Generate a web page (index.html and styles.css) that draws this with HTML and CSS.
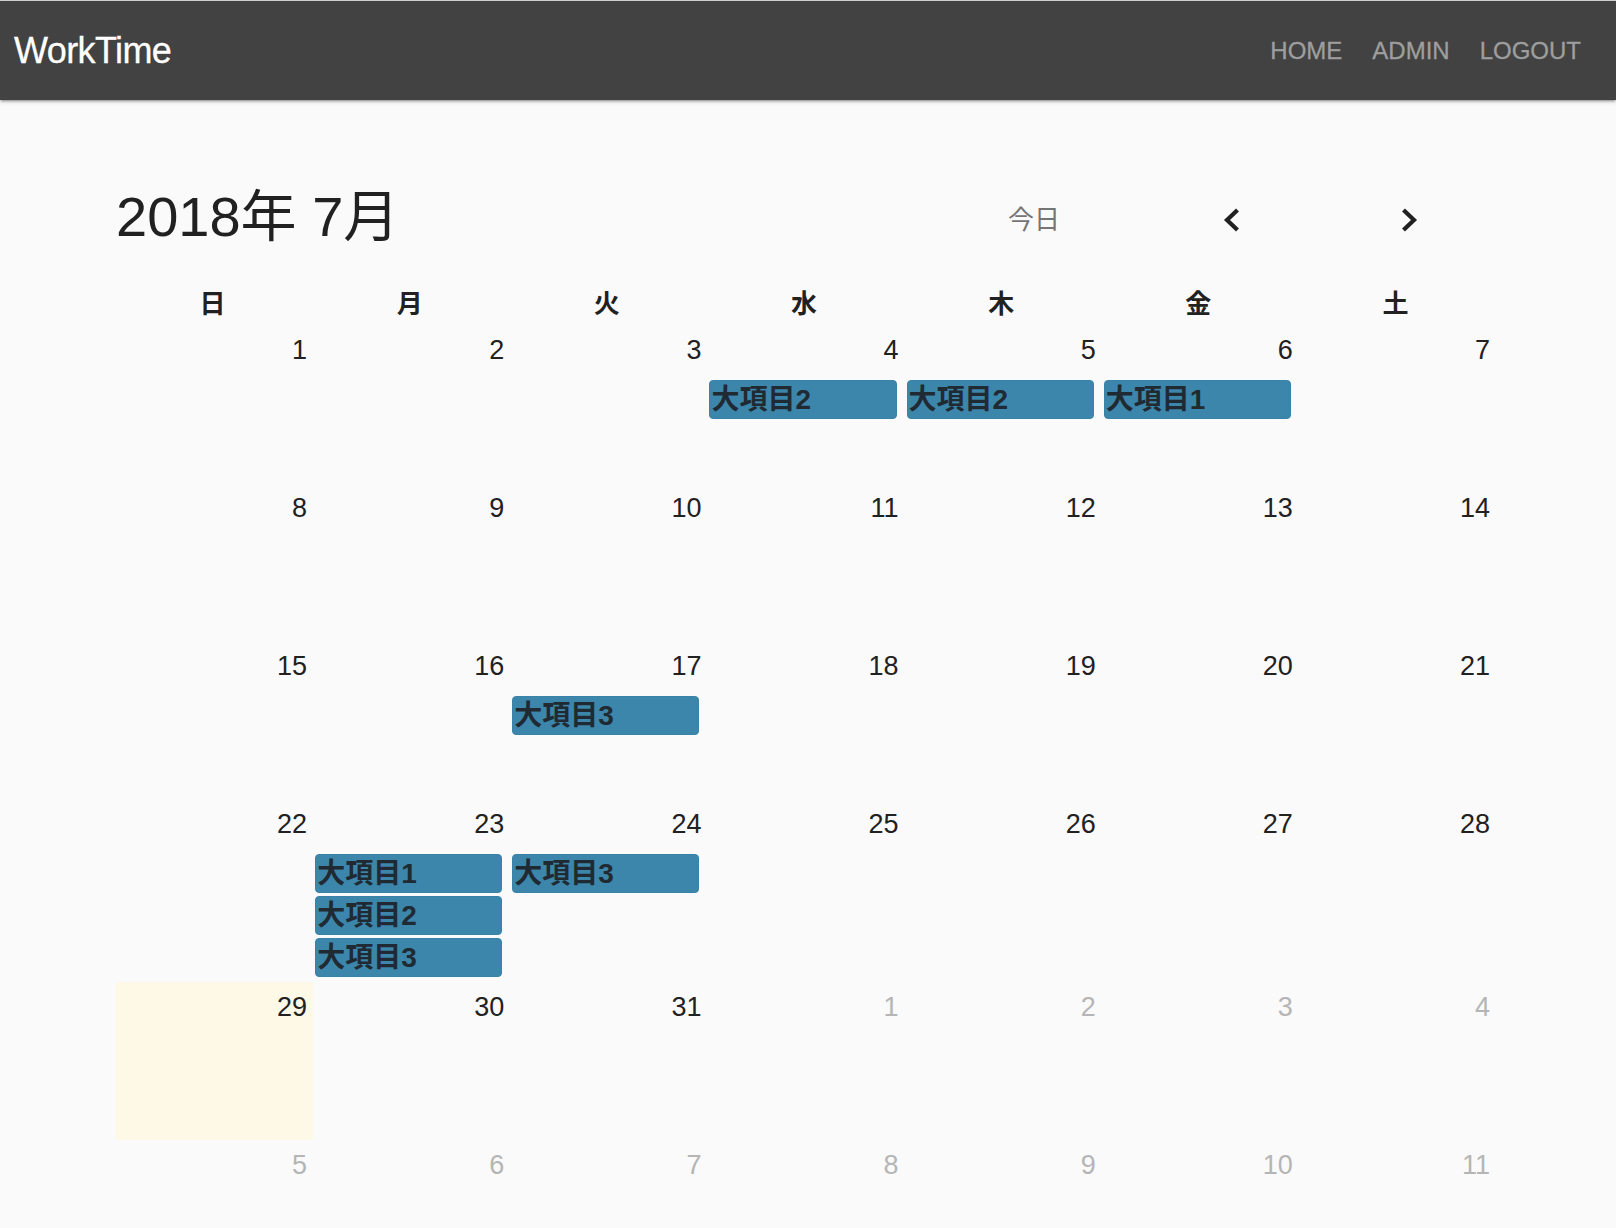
FILE: index.html
```html
<!DOCTYPE html>
<html lang="ja">
<head>
<meta charset="utf-8">
<title>WorkTime</title>
<link rel="stylesheet" href="styles.css">
</head>
<body>
<header class="navbar">
  <a class="brand" href="#">WorkTime</a>
  <nav class="nav-links">
    <a href="#">HOME</a>
    <a href="#">ADMIN</a>
    <a href="#">LOGOUT</a>
  </nav>
</header>
<main class="container">
  <div class="toolbar">
    <h2 class="title">2018年 7月</h2>
    <div class="controls">
      <button class="btn-today">今日</button>
      <button class="btn-arrow btn-prev" aria-label="prev"><svg width="20" height="26" viewBox="0 0 20 26"><polyline points="15.5,3 5,13 15.5,23" fill="none" stroke="#212121" stroke-width="4.2" stroke-linejoin="miter"/></svg></button>
      <button class="btn-arrow btn-next" aria-label="next"><svg width="20" height="26" viewBox="0 0 20 26"><polyline points="4.5,3 15,13 4.5,23" fill="none" stroke="#212121" stroke-width="4.2" stroke-linejoin="miter"/></svg></button>
    </div>
  </div>
  <div class="calendar">
    <div class="dow-row">
      <div class="dow">日</div><div class="dow">月</div><div class="dow">火</div><div class="dow">水</div><div class="dow">木</div><div class="dow">金</div><div class="dow">土</div>
    </div>
    <div class="week">
      <div class="day"><div class="num">1</div></div>
      <div class="day"><div class="num">2</div></div>
      <div class="day"><div class="num">3</div></div>
      <div class="day"><div class="num">4</div><div class="events"><div class="event">大項目2</div></div></div>
      <div class="day"><div class="num">5</div><div class="events"><div class="event">大項目2</div></div></div>
      <div class="day"><div class="num">6</div><div class="events"><div class="event">大項目1</div></div></div>
      <div class="day"><div class="num">7</div></div>
    </div>
    <div class="week">
      <div class="day"><div class="num">8</div></div>
      <div class="day"><div class="num">9</div></div>
      <div class="day"><div class="num">10</div></div>
      <div class="day"><div class="num">11</div></div>
      <div class="day"><div class="num">12</div></div>
      <div class="day"><div class="num">13</div></div>
      <div class="day"><div class="num">14</div></div>
    </div>
    <div class="week">
      <div class="day"><div class="num">15</div></div>
      <div class="day"><div class="num">16</div></div>
      <div class="day"><div class="num">17</div><div class="events"><div class="event">大項目3</div></div></div>
      <div class="day"><div class="num">18</div></div>
      <div class="day"><div class="num">19</div></div>
      <div class="day"><div class="num">20</div></div>
      <div class="day"><div class="num">21</div></div>
    </div>
    <div class="week">
      <div class="day"><div class="num">22</div></div>
      <div class="day"><div class="num">23</div><div class="events"><div class="event">大項目1</div><div class="event">大項目2</div><div class="event">大項目3</div></div></div>
      <div class="day"><div class="num">24</div><div class="events"><div class="event">大項目3</div></div></div>
      <div class="day"><div class="num">25</div></div>
      <div class="day"><div class="num">26</div></div>
      <div class="day"><div class="num">27</div></div>
      <div class="day"><div class="num">28</div></div>
    </div>
    <div class="week">
      <div class="day today"><div class="num">29</div></div>
      <div class="day"><div class="num">30</div></div>
      <div class="day"><div class="num">31</div></div>
      <div class="day other"><div class="num">1</div></div>
      <div class="day other"><div class="num">2</div></div>
      <div class="day other"><div class="num">3</div></div>
      <div class="day other"><div class="num">4</div></div>
    </div>
    <div class="week">
      <div class="day other"><div class="num">5</div></div>
      <div class="day other"><div class="num">6</div></div>
      <div class="day other"><div class="num">7</div></div>
      <div class="day other"><div class="num">8</div></div>
      <div class="day other"><div class="num">9</div></div>
      <div class="day other"><div class="num">10</div></div>
      <div class="day other"><div class="num">11</div></div>
    </div>
  </div>
</main>
</body>
</html>
```

FILE: styles.css
```css
* { box-sizing: border-box; }

html, body {
  margin: 0;
  padding: 0;
}

body {
  background: #fafafa;
  color: #212121;
  font-family: "Liberation Sans", "Noto Sans CJK JP", sans-serif;
}

.navbar {
  height: 100px;
  border-top: 1px solid #cfcfcf;
  background: #424242;
  display: flex;
  align-items: center;
  justify-content: space-between;
  padding: 0 20px 0 14px;
  box-shadow: 0 2px 2px 0 rgba(0,0,0,0.14), 0 3px 1px -2px rgba(0,0,0,0.12), 0 1px 5px 0 rgba(0,0,0,0.2);
  position: relative;
}

.brand {
  color: #ffffff;
  text-decoration: none;
  font-size: 36px;
  letter-spacing: -0.6px;
  line-height: 40px;
  -webkit-text-stroke: 0.3px #ffffff;
}

.nav-links {
  display: flex;
}

.nav-links a {
  color: #9e9e9e;
  text-decoration: none;
  font-size: 24px;
  line-height: 30px;
  padding: 0 15px;
  -webkit-text-stroke: 0.3px #9e9e9e;
}

.container {
  padding: 0 120px 0 116px;
}

.toolbar {
  margin-top: 82px;
  height: 70px;
  display: flex;
  align-items: center;
  justify-content: space-between;
}

.title {
  margin: 0;
  font-size: 56px;
  font-weight: normal;
  line-height: 70px;
  color: #212121;
}

.controls {
  display: flex;
  align-items: center;
  padding-top: 6px;
  margin-right: 59px;
}

.controls button {
  background: none;
  border: none;
  padding: 0;
  margin: 0;
  font-family: inherit;
  display: flex;
  align-items: center;
  justify-content: center;
  height: 40px;
}

.btn-today {
  width: 140px;
  color: #757575;
  font-size: 26px;
  line-height: 40px;
}

.btn-prev {
  width: 56px;
  margin-left: 100px !important;
}

.btn-next {
  width: 56px;
  margin-left: 121px !important;
}

.calendar {
  margin-top: 33px;
}

.dow-row {
  display: grid;
  grid-template-columns: repeat(7, 1fr);
  height: 40px;
  padding-bottom: 2px;
}

.dow {
  text-align: center;
  font-size: 26px;
  font-weight: bold;
  line-height: 38px;
  padding-right: 4px;
}

.week {
  display: grid;
  grid-template-columns: repeat(7, 1fr);
  min-height: 158px;
}

.day {
  padding-bottom: 5px;
}

.day.today {
  background: #fef8e6;
}

.num {
  text-align: right;
  font-size: 27px;
  line-height: 30px;
  padding: 10px 6px 0 0;
}

.day.other .num {
  color: #b5b5b5;
}

.events {
  margin-top: 15px;
  display: flex;
  flex-direction: column;
  gap: 3px;
}

.event {
  margin: 0 8px 0 2px;
  height: 39px;
  background: #3d86ab;
  border: 1px solid #3a83a8;
  border-radius: 4px;
  color: #1f2a33;
  font-weight: bold;
  font-size: 28px;
  line-height: 37px;
  padding: 0 1px;
  white-space: nowrap;
  overflow: hidden;
}
```
